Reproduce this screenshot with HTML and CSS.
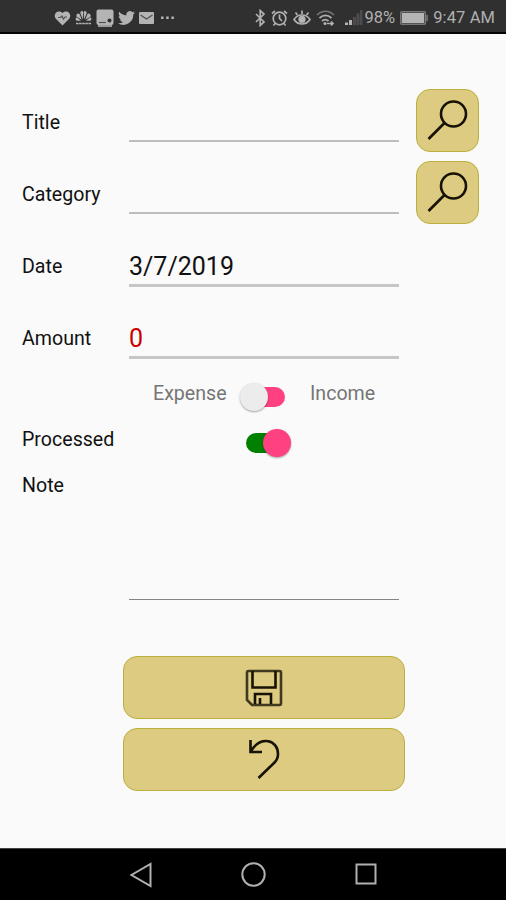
FILE: index.html
```
<!DOCTYPE html>
<html lang="en">

<head>
  <meta charset="UTF-8">
  <meta name="viewport" content="width=device-width, initial-scale=1.0">
  <title>Transaction</title>
  <link rel="stylesheet" href="styles.css">
</head>

<body>
  <header class="status-bar">
    <div class="notifications">
      <svg width="17" height="16" viewBox="0 0 17 16">
        <path class="fill" d="M8.5 15.5 1.8 8.8C-1.5 4.6 3.5-1.3 8.5 3c5-4.3 10 1.6 6.7 5.8z" />
        <path class="cut" d="M4 7.5h2.5l1.5-1.5 1.5 3 1.5-2H13" />
      </svg>
      <svg width="17" height="16" viewBox="0 0 17 16">
        <path class="fill" d="M7.9 9.5 5.3 3.2C5.3.8 8 .5 8.2 2zM9.1 9.5l2.6-6.3C11.7.8 9 .5 8.8 2zM6.7 9.8 1.4 6.4C.9 3.4 3.8 2.6 4.8 4.4zM10.3 9.8l5.3-3.4c.5-3-2.4-3.8-3.4-2zM6 10.7H2C0 9.9.2 7.2 2.2 7.4zM11 10.7h4c2-.8 1.8-3.5-.2-3.3z" />
        <path class="line" d="M1 13.5h15" stroke-dasharray="2.6 .5" stroke-width="3" />
      </svg>
      <svg width="18" height="18" viewBox="0 0 18 18">
        <rect class="fill" x=".5" y=".5" width="17" height="15.5" rx="2" />
        <path class="line" d="M2 17h14" />
        <circle class="hole" cx="13.5" cy="11.5" r="2" />
        <path class="cut" d="M3 13.5h7" />
      </svg>
      <svg width="17" height="16" viewBox="0 0 24 21">
        <path class="fill" d="M24 3c-.9.4-1.8.7-2.8.8 1-.6 1.8-1.6 2.2-2.7-1 .6-2 1-3.1 1.200a4.900 4.900 0 0 0-8.400 4.500C7.700 6.600 4.100 4.600 1.700 1.700.4 3.900 1 6.700 3.200 8.200c-.8 0-1.600-.2-2.200-.6 0 2.300 1.600 4.400 3.900 4.900-.7.200-1.500.2-2.200.1.600 1.900 2.400 3.300 4.600 3.400A9.900 9.900 0 0 1 0 18a14 14 0 0 0 21.500-12.400C22.500 4.900 23.300 4 24 3z" />
      </svg>
      <svg width="15" height="16" viewBox="0 0 15 16">
        <rect class="fill" y="2" width="15" height="12" rx="1" />
        <path class="cut" d="m1.5 5 6 4 6-4" />
      </svg>
      <svg width="13" height="16" viewBox="0 0 13 16">
        <path class="fill" d="M0 6.5h2.500V9H0zM5.200 6.500h2.500V9H5.200zM10.400 6.500h2.500V9h-2.500z" />
      </svg>
    </div>
    <div class="system">
      <svg width="11" height="18" viewBox="0 0 11 18">
        <path class="line" d="m1 5 8 8-3.800 3.500v-15L9 5l-8 8" />
      </svg>
      <svg width="17" height="18" viewBox="0 0 17 18">
        <circle class="line" cx="8.5" cy="9.5" r="6.3" />
        <path class="line" d="M8.5 5.5v4l2.500 2.500M1 4.500 4 2M16 4.500 13 2M4 14.500l-1.500 2M13 14.500l1.500 2" />
      </svg>
      <svg width="18" height="18" viewBox="0 0 18 18">
        <path class="line" d="M1 10.500c4-6 12-6 16 0-4 6-12 6-16 0zM9 5V1.500M4.500 6 2.500 3.500M13.500 6l2-2.500" />
        <circle class="fill" cx="9" cy="10.300" r="3.600" />
      </svg>
      <svg width="19" height="18" viewBox="0 0 19 18">
        <path class="dim" d="M1 6c5-5 12-5 17 0" />
        <path class="line" d="M3.500 9c4-3.500 8-3.500 12 0M6 12c2-1.800 4.500-1.800 6.500 0" />
        <circle class="fill" cx="9" cy="14.500" r="1.500" />
        <path class="line" d="M11 14.500h6M15 12.500l2 2-2 2" />
      </svg>
      <svg class="signal" width="18" height="18" viewBox="0 0 18 18">
        <path class="fill" d="M0 13.500h3V16H0zM4 11h3v5H4z" />
        <path class="faint" d="M8 8h3v8H8zM11.500 4.500h3V16h-3zM15 1h2.500v15H15z" />
      </svg>
      <span class="percent">98%</span>
      <svg class="battery" width="29" height="14" viewBox="0 0 29 14">
        <rect class="dim" x=".8" y=".8" width="24.500" height="12.400" rx="1" />
        <rect class="fill" x="2" y="2" width="22" height="10" />
        <path class="dim" d="M27 4v6" />
      </svg>
      <span class="clock">9:47 AM</span>
    </div>
  </header>

  <main class="form">
    <div class="row">
      <label for="title">Title</label>
      <input id="title" type="text">
      <button class="btn search" aria-label="Search title">
        <svg width="63" height="63" viewBox="0 0 63 63">
          <circle cx="37.500" cy="25" r="12.500" />
          <path d="M28.500 34 12.500 50" />
        </svg>
      </button>
    </div>
    <div class="row">
      <label for="category">Category</label>
      <input id="category" type="text">
      <button class="btn search" aria-label="Search category">
        <svg width="63" height="63" viewBox="0 0 63 63">
          <circle cx="37.500" cy="25" r="12.500" />
          <path d="M28.500 34 12.500 50" />
        </svg>
      </button>
    </div>
    <div class="row">
      <label for="date">Date</label>
      <input id="date" class="thick" type="text" value="3/7/2019">
    </div>
    <div class="row">
      <label for="amount">Amount</label>
      <input id="amount" class="thick negative" type="text" value="0">
    </div>
    <div class="type-row">
      <span class="expense">Expense</span>
      <div class="switch"><span class="thumb"></span></div>
      <span class="income">Income</span>
    </div>
    <div class="processed-row">
      <label>Processed</label>
      <div class="switch on"><span class="thumb"></span></div>
    </div>
    <div class="note-row">
      <label for="note">Note</label>
      <textarea id="note"></textarea>
    </div>
    <div class="actions">
      <button class="btn" aria-label="Save">
        <svg width="38" height="38" viewBox="0 0 38 38">
          <path class="outer" d="M3.500 2h31q1.500 0 1.500 1.500v31q0 1.500-1.500 1.500H7L2 31V3.500q0-1.500 1.500-1.500z" />
          <path d="M7.500 2v16.500h23V2M10 35V25h16v10M15 29v6" />
        </svg>
      </button>
      <button class="btn" aria-label="Undo">
        <svg width="38" height="44" viewBox="0 0 38 44">
          <path d="M5.500 2v12H17M6 13C16-3 33 2 33 16c0 4-1.500 6.500-3.500 8.500L13.500 40" />
        </svg>
      </button>
    </div>
  </main>

  <footer class="nav-bar">
    <svg width="24" height="26" viewBox="0 0 24 26">
      <path d="M21.500 2v22L2.500 13z" />
    </svg>
    <svg width="26" height="26" viewBox="0 0 26 26">
      <circle cx="13.500" cy="12.500" r="11.200" />
    </svg>
    <svg width="24" height="26" viewBox="0 0 24 26">
      <rect x="3.500" y="2.500" width="19" height="19" />
    </svg>
  </footer>
</body>

</html>
```
FILE: styles.css
```
* {
  margin: 0;
  padding: 0;
  box-sizing: border-box;
}

body {
  display: flex;
  flex-direction: column;
  width: 506px;
  height: 900px;
  background: #fafafa;
  font-family: Roboto, sans-serif;
  font-size: 19.6px;
  line-height: 26px;
  color: #111;
  overflow: hidden;
}

svg {
  display: block;
  flex-shrink: 0;
  fill: none;
}

/* Status bar */
.status-bar {
  display: flex;
  justify-content: space-between;
  height: 34px;
  padding: 0 11px 0 54px;
  background: #303030;
  border-bottom: 2px solid #050505;
  font-size: 16.5px;
  color: #b0b0b0;
}

.notifications,
.system {
  display: flex;
  align-items: center;
  height: 35px;
}

.notifications {
  gap: 4px;
}

.notifications svg:last-child {
  margin-left: 3px;
}

.system {
  gap: 5px;
}

.fill {
  fill: #b4b4b4;
}

.hole {
  fill: #303030;
}

.line {
  stroke: #b0b0b0;
  stroke-width: 1.7;
}

.cut {
  stroke: #505050;
  stroke-width: 1.2;
}

.dim {
  stroke: #777;
  stroke-width: 1.6;
}

.faint {
  fill: #4c4c4c;
}

.signal {
  margin-left: 5px;
}

.percent {
  margin-left: -3px;
}

.clock {
  margin-left: -1px;
  letter-spacing: 0.1px;
}

/* Form */
.form {
  flex: 1;
  padding: 51px 27px 0 22px;
}

.row {
  display: flex;
  height: 72px;
}

label {
  width: 107px;
  flex-shrink: 0;
}

.row label {
  padding-top: 25px;
}

input,
textarea {
  width: 270px;
  background: none;
  border: 0;
  outline: 0;
  resize: none;
  font-family: inherit;
  font-size: 25px;
  color: #111;
}

input {
  height: 57px;
  padding-top: 19px;
  border-bottom: 2px solid #bdbdbd;
}

input.thick {
  height: 58px;
  border-bottom: 3px solid #c6c6c6;
}

input.negative {
  color: #c80000;
}

.btn {
  display: flex;
  align-items: center;
  justify-content: center;
  width: 282px;
  height: 63px;
  background: #dccb81;
  border: 1.5px solid #b9b13c;
  border-radius: 14px;
}

.btn svg {
  stroke: #171206;
  stroke-width: 2.6;
}

.btn .outer {
  stroke: #40391d;
}

.btn.search {
  width: 63px;
  margin: 4px 0 0 17px;
}

.btn.search svg {
  margin-left: -1px;
}

/* Switches */
.switch {
  position: relative;
  width: 39px;
  height: 20px;
  border-radius: 10px;
  background: #ff4081;
}

.thumb {
  position: absolute;
  top: -4px;
  left: -6px;
  width: 28px;
  height: 28px;
  border-radius: 50%;
  background: #ececec;
  box-shadow: 0 1px 2px rgba(0, 0, 0, 0.35);
}

.switch.on {
  background: #008000;
}

.switch.on .thumb {
  left: 17px;
  background: #ff4081;
}

.type-row {
  display: flex;
  height: 54px;
  padding: 8px 0 0 131px;
  color: #757575;
}

.expense {
  width: 93px;
}

.type-row .switch {
  margin-top: 6px;
}

.income {
  margin-left: 25px;
}

.processed-row {
  display: flex;
  height: 46px;
}

.processed-row .switch {
  margin: 6px 0 0 117px;
}

.note-row {
  display: flex;
  height: 183px;
}

textarea {
  height: 127px;
  border-bottom: 1px solid #858585;
}

.actions {
  display: flex;
  flex-direction: column;
  gap: 9px;
  margin-left: 101px;
}

/* Navigation bar */
.nav-bar {
  display: flex;
  align-items: center;
  justify-content: center;
  gap: 87px;
  height: 52px;
  background: #000;
  border-top: 1px solid #444;
}

.nav-bar svg {
  stroke: #b0b0b0;
  stroke-width: 2;
}
```
